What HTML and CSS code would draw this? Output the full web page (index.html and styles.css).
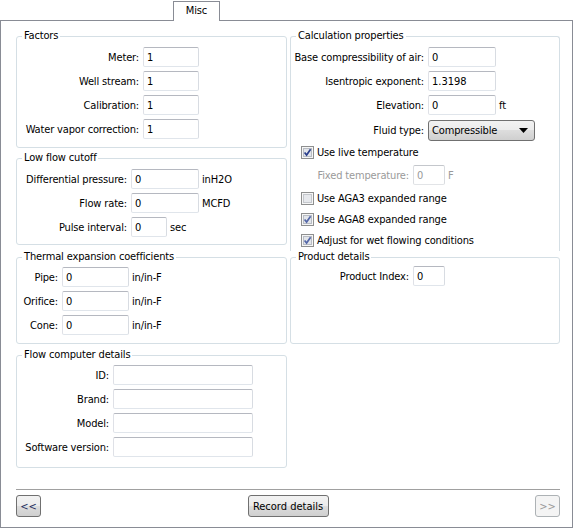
FILE: index.html
```html
<!DOCTYPE html>
<html lang="en">
<head>
    <meta charset="UTF-8">
    <meta name="viewport" content="width=device-width, initial-scale=1.0">
    <title>Misc</title>
    <link rel="stylesheet" href="styles.css">
</head>
<body>

<div class="tabs">
    <div class="tab">Misc</div>
</div>

<div class="panel">
    <div class="columns">
        <div class="col">
            <fieldset class="group factors">
                <legend>Factors</legend>
                <div class="row"><label>Meter:</label><input type="text" class="w56" value="1"></div>
                <div class="row"><label>Well stream:</label><input type="text" class="w56" value="1"></div>
                <div class="row"><label>Calibration:</label><input type="text" class="w56" value="1"></div>
                <div class="row"><label>Water vapor correction:</label><input type="text" class="w56" value="1"></div>
            </fieldset>

            <fieldset class="group lowflow">
                <legend>Low flow cutoff</legend>
                <div class="row"><label>Differential pressure:</label><input type="text" class="w68" value="0"><span class="unit">inH2O</span></div>
                <div class="row"><label>Flow rate:</label><input type="text" class="w68" value="0"><span class="unit">MCFD</span></div>
                <div class="row"><label>Pulse interval:</label><input type="text" class="w36" value="0"><span class="unit">sec</span></div>
            </fieldset>

            <fieldset class="group thermal">
                <legend>Thermal expansion coefficients</legend>
                <div class="row"><label>Pipe:</label><input type="text" class="w67" value="0"><span class="unit">in/in-F</span></div>
                <div class="row"><label>Orifice:</label><input type="text" class="w67" value="0"><span class="unit">in/in-F</span></div>
                <div class="row"><label>Cone:</label><input type="text" class="w67" value="0"><span class="unit">in/in-F</span></div>
            </fieldset>

            <fieldset class="group computer">
                <legend>Flow computer details</legend>
                <div class="row"><label>ID:</label><input type="text" class="w140" value=""></div>
                <div class="row"><label>Brand:</label><input type="text" class="w140" value=""></div>
                <div class="row"><label>Model:</label><input type="text" class="w140" value=""></div>
                <div class="row"><label>Software version:</label><input type="text" class="w140" value=""></div>
            </fieldset>
        </div>

        <div class="col">
            <fieldset class="group calc">
                <legend>Calculation properties</legend>
                <div class="row"><label>Base compressibility of air:</label><input type="text" class="w68" value="0"></div>
                <div class="row"><label>Isentropic exponent:</label><input type="text" class="w68" value="1.3198"></div>
                <div class="row"><label>Elevation:</label><input type="text" class="w68" value="0"><span class="unit">ft</span></div>
                <div class="row select-row">
                    <label>Fluid type:</label>
                    <div class="combo">
                        <span>Compressible</span>
                        <svg width="9" height="5" viewBox="0 0 9 5"><path d="M0 0 H9 L4.5 5 Z" fill="#000"/></svg>
                    </div>
                </div>
                <div class="check live">
                    <svg width="13" height="13" viewBox="0 0 13 13"><rect x="0.5" y="0.5" width="12" height="12" fill="#f6f6f6" stroke="#8e8f8f"/><rect x="2.5" y="2.5" width="8" height="8" fill="#e2e5ea" stroke="#b8bcc3"/><path d="M3.6 6.4 L5.6 9 L9.6 3.3" fill="none" stroke="#2b3f8c" stroke-width="1.7"/></svg>
                    <span>Use live temperature</span>
                </div>
                <div class="row fixed">
                    <label>Fixed temperature:</label><input type="text" class="w32" value="0" disabled><span class="unit">F</span>
                </div>
                <div class="check aga3">
                    <svg width="13" height="13" viewBox="0 0 13 13"><rect x="0.5" y="0.5" width="12" height="12" fill="#f6f6f6" stroke="#8e8f8f"/><rect x="2.5" y="2.5" width="8" height="8" fill="#e6e8ec" stroke="#c4c7cc"/></svg>
                    <span>Use AGA3 expanded range</span>
                </div>
                <div class="check">
                    <svg width="13" height="13" viewBox="0 0 13 13"><rect x="0.5" y="0.5" width="12" height="12" fill="#f6f6f6" stroke="#8e8f8f"/><rect x="2.5" y="2.5" width="8" height="8" fill="#e2e5ea" stroke="#b8bcc3"/><path d="M3.6 6.4 L5.6 9 L9.6 3.3" fill="none" stroke="#5467a8" stroke-width="1.7"/></svg>
                    <span>Use AGA8 expanded range</span>
                </div>
                <div class="check">
                    <svg width="13" height="13" viewBox="0 0 13 13"><rect x="0.5" y="0.5" width="12" height="12" fill="#f6f6f6" stroke="#8e8f8f"/><rect x="2.5" y="2.5" width="8" height="8" fill="#e2e5ea" stroke="#b8bcc3"/><path d="M3.6 6.4 L5.6 9 L9.6 3.3" fill="none" stroke="#5467a8" stroke-width="1.7"/></svg>
                    <span>Adjust for wet flowing conditions</span>
                </div>
            </fieldset>

            <fieldset class="group product">
                <legend>Product details</legend>
                <div class="row"><label>Product Index:</label><input type="text" class="w32" value="0"></div>
            </fieldset>
        </div>
    </div>

    <div class="footer">
        <button type="button" class="nav">&lt;&lt;</button>
        <button type="button" class="record">Record details</button>
        <button type="button" class="nav" disabled>&gt;&gt;</button>
    </div>
</div>

</body>
</html>
```

FILE: styles.css
```css
body {
    margin: 0;
    background-color: #fff;
    font-family: "DejaVu Sans Condensed", "DejaVu Sans", sans-serif;
    font-size: 11px;
    letter-spacing: -0.15px;
    color: #000;
}
.tabs {
    display: flex;
    height: 20px;
    padding: 1px 0 0 173px;
    box-sizing: border-box;
}
.tab {
    position: relative;
    width: 47px;
    height: 20px;
    box-sizing: border-box;
    border: 1px solid #898c95;
    border-bottom: none;
    background-color: #fff;
    text-align: center;
    line-height: 18px;
}
.panel {
    height: 508px;
    box-sizing: border-box;
    border: 1px solid #898c95;
    padding: 8px 12px 10px 15px;
}
.columns {
    display: grid;
    grid-template-columns: 271px 270px;
    column-gap: 3px;
    align-items: start;
}
.col {
    display: flex;
    flex-direction: column;
}
.group {
    margin: 0;
    min-width: 0;
    border: 1px solid #d5dfe5;
    border-radius: 3px;
    padding: 4px 0 8px 0;
}
.group legend {
    margin-left: 5px;
    padding: 0 2px;
    line-height: 14px;
}
.row {
    display: flex;
    align-items: center;
    height: 20px;
}
.row + .row {
    margin-top: 4px;
}
.row label {
    flex: none;
    text-align: right;
    margin-right: 4px;
    white-space: nowrap;
}
.unit {
    margin-left: 3px;
}
input[type="text"] {
    height: 20px;
    box-sizing: border-box;
    margin: 0;
    padding: 0 3px;
    border: 1px solid;
    border-color: #b5b8c0 #d8dce2 #e0e5eb #dfe1e7;
    border-radius: 2px;
    font: inherit;
    color: #000;
    background-color: #fff;
}
input[type="text"]:disabled {
    color: #9a9a9a;
    border-color: #c4c7cc #d9dce0 #e2e4e7 #dcdee2;
}
.w32 { width: 32px; }
.w36 { width: 36px; }
.w56 { width: 56px; }
.w67 { width: 67px; }
.w68 { width: 68px; }
.w140 { width: 140px; }

/* left column */
.factors label { width: 122px; }
.lowflow { margin-top: 3px; padding-bottom: 7px; }
.lowflow label { width: 110px; }
.thermal { margin-top: 5px; padding-top: 3px; }
.thermal label { width: 41px; }
.computer { margin-top: 4px; padding-top: 3px; padding-bottom: 10px; }
.computer label { width: 92px; }

/* right column */
.calc {
    padding-bottom: 0;
    border-bottom: none;
    border-bottom-left-radius: 0;
    border-bottom-right-radius: 0;
}
.calc label { width: 133px; }
.calc .select-row { margin-top: 5px; height: 21px; }
.combo {
    display: flex;
    align-items: center;
    justify-content: space-between;
    width: 107px;
    height: 21px;
    box-sizing: border-box;
    padding: 0 6px 0 3px;
    border: 1px solid #707070;
    border-radius: 3px;
    background: linear-gradient(#f2f2f2, #ebebeb 50%, #dddddd 50%, #cfcfcf);
}
.check {
    display: flex;
    align-items: center;
    height: 21px;
    padding-left: 10px;
}
.check svg {
    flex: none;
    margin-right: 3px;
}
.check.live { margin-top: 1px; }
.calc .fixed { margin-top: 2px; color: #9a9a9a; }
.calc .fixed label { width: 118px; }
.check.aga3 { margin-top: 3px; }
.product { margin-top: -1px; padding-top: 2px; padding-bottom: 57px; }
.product label { width: 118px; }

.footer {
    display: flex;
    justify-content: space-between;
    width: 544px;
    margin-top: 21px;
    padding-top: 5px;
    border-top: 1px solid #a0a0a0;
}
button {
    height: 22px;
    margin: 0;
    padding: 0;
    border: 1px solid #707070;
    border-radius: 3px;
    background: linear-gradient(#f2f2f2, #ebebeb 50%, #dddddd 50%, #cfcfcf);
    font: inherit;
    color: #000;
}
button.nav {
    width: 25px;
    color: #1e2f5e;
}
button.record {
    width: 81px;
}
button:disabled {
    border-color: #adb2b5;
    background: #f4f4f4;
    color: #9a9a9a;
}
```
